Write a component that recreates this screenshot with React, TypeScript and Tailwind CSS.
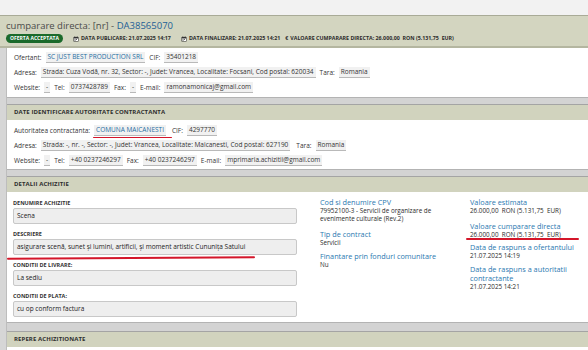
import React from 'react';

const Cal = () => (
  <svg width="6" height="6" viewBox="0 0 12 12" className="mr-[2px] shrink-0">
    <rect x="1" y="2" width="10" height="9" fill="#333" />
    <rect x="2" y="5" width="8" height="5" fill="#fff" />
    <rect x="3" y="0.5" width="1.5" height="3" fill="#333" />
    <rect x="7.5" y="0.5" width="1.5" height="3" fill="#333" />
    <rect x="3" y="6" width="2" height="1.5" fill="#333" />
    <rect x="6" y="6" width="2" height="1.5" fill="#333" />
    <rect x="3" y="8" width="2" height="1.5" fill="#333" />
  </svg>
);

const Val = ({ children, blue }: { children: React.ReactNode; blue?: boolean }) => (
  <span
    className={`inline-block bg-[#f1f1f1] border-b border-[#b9b9b9] px-[2px] leading-[10px] ${
      blue ? 'text-[#1f6ea3]' : 'text-[#333]'
    }`}
  >
    {children}
  </span>
);

const Row = ({ children }: { children: React.ReactNode }) => (
  <div className="h-[15px] flex items-center gap-[4px] whitespace-nowrap">{children}</div>
);

const Separator = () => (
  <div className="h-[8px] bg-[#d3d3d3] border-t border-[#b3b3b3] border-b border-b-[#a4a4a4]" />
);

const SectionHeader = ({ title }: { title: string }) => (
  <div className="h-[15px] bg-[#d1d3be] flex items-center px-[7px] text-[6px] font-bold text-[#2e2e2e] tracking-[0.1px]">
    {title}
  </div>
);

const Field = ({ label, value, mark }: { label: string; value: string; mark?: boolean }) => (
  <div>
    <div className="text-[5.5px] leading-[8px] font-bold text-[#333] uppercase mb-[1px]">{label}</div>
    <div className="relative h-[16px] bg-[#eeeeee] border border-[#c8c8c8] rounded-[2px] px-[3px] flex items-center text-[6.5px] text-[#222]">
      {value}
      {mark && (
        <div className="absolute left-[-7px] top-[17px] w-[248px] h-[1.5px] bg-[#d4162a] rounded-full rotate-[-0.3deg]" />
      )}
    </div>
  </div>
);

const Info = ({ title, lines, className = '' }: { title: string[]; lines: string[]; className?: string }) => (
  <div className={className}>
    {title.map((t) => (
      <div key={t} className="text-[7.3px] leading-[9px] text-[#2a78b0] whitespace-nowrap">
        {t}
      </div>
    ))}
    {lines.map((l) => (
      <div key={l} className="text-[6.3px] leading-[7.5px] text-[#2b2b2b] whitespace-nowrap">
        {l}
      </div>
    ))}
  </div>
);

export default function App() {
  return (
    <div className="w-[588px] h-[350px] overflow-hidden bg-[#f2f2f2] font-['Open_Sans',sans-serif] text-[#333]">
      <div className="h-[15px] bg-[#f2f2f2]" />

      {/* header */}
      <div className="h-[33px] bg-[#d3d5c0] border-t border-[#a9ab97] border-b-2 border-b-[#b4b6a0] px-[6px] pt-[3px]">
        <div className="text-[9.5px] leading-[13px] text-[#4a4a4a]">
          cumparare directa: [nr] - <span className="text-[#1d5f96]">DA38565070</span>
        </div>
        <div className="flex items-center mt-[2px] text-[5.3px] font-bold text-[#2b2b2b] whitespace-nowrap">
          <span className="bg-[#1b6a2b] text-white text-[5px] rounded-full px-[4px] h-[9px] leading-[9px] mr-[10px]">
            OFERTA ACCEPTATA
          </span>
          <Cal />
          <span className="mr-[10px]">DATA PUBLICARE: 21.07.2025 14:17</span>
          <Cal />
          <span className="mr-[5px]">DATA FINALIZARE: 21.07.2025 14:21</span>
          <span className="mr-[2px]">€</span>
          <span>VALOARE CUMPARARE DIRECTA: 26.000,00&nbsp; RON (5.131,75&nbsp; EUR)</span>
        </div>
      </div>

      <div className="flex">
        <div className="w-[7px] bg-[#d6d6d6] border-r border-[#bdbdbd] shrink-0" />
        <div className="flex-1 text-[6.5px]">
          {/* ofertant */}
          <div className="bg-white pt-[2px] pb-[2px] px-[7px]">
            <Row>
              <span>Ofertant:</span>
              <Val blue>SC JUST BEST PRODUCTION SRL</Val>
              <span>CIF:</span>
              <Val>35401218</Val>
            </Row>
            <Row>
              <span>Adresa:</span>
              <Val>Strada: Cuza Vodă, nr. 32, Sector: -, Judet: Vrancea, Localitate: Focsani, Cod postal: 620034</Val>
              <span>Tara:</span>
              <Val>Romania</Val>
            </Row>
            <Row>
              <span>Website:</span>
              <Val>-</Val>
              <span>Tel:</span>
              <Val>0737428789</Val>
              <span>Fax:</span>
              <Val>-</Val>
              <span>E-mail:</span>
              <Val>ramonamonicaj@gmail.com</Val>
            </Row>
          </div>

          <Separator />
          <SectionHeader title="DATE IDENTIFICARE AUTORITATE CONTRACTANTA" />

          <div className="bg-white pt-[3px] pb-[1px] px-[7px]">
            <Row>
              <span>Autoritatea contractanta:</span>
              <span className="relative">
                <Val blue>COMUNA MAICANESTI</Val>
                <span className="absolute left-[-1px] right-[-6px] bottom-[-2px] h-[1.5px] bg-[#d4162a] rounded-full" />
              </span>
              <span className="ml-[2px]">CIF:</span>
              <Val>4297770</Val>
            </Row>
            <Row>
              <span>Adresa:</span>
              <Val>Strada: -, nr. -, Sector: -, Judet: Vrancea, Localitate: Maicanesti, Cod postal: 627190</Val>
              <span className="ml-[2px]">Tara:</span>
              <Val>Romania</Val>
            </Row>
            <Row>
              <span>Website:</span>
              <Val>-</Val>
              <span>Tel:</span>
              <Val>+40 0237246297</Val>
              <span>Fax:</span>
              <Val>+40 0237246297</Val>
              <span>E-mail:</span>
              <Val>mprimaria.achizitii@gmail.com</Val>
            </Row>
          </div>

          <Separator />
          <SectionHeader title="DETALII ACHIZITIE" />

          <div className="bg-white pt-[7px] pb-[5px] pl-[6px] grid grid-cols-[284px_127px_1fr] gap-x-[23px]">
            <div className="flex flex-col gap-[6px]">
              <Field label="Denumire achizitie" value="Scena" />
              <Field
                label="Descriere"
                value="asigurare scenă, sunet și lumini, artificii, și moment artistic Cununița Satului"
                mark
              />
              <Field label="Conditii de livrare:" value="La sediu" />
              <Field label="Conditii de plata:" value="cu op conform factura" />
            </div>

            <div className="-mt-[1px]">
              <Info
                title={['Cod si denumire CPV']}
                lines={['79952100-3 - Servicii de organizare de', 'evenimente culturale (Rev.2)']}
              />
              <Info className="mt-[7.5px]" title={['Tip de contract']} lines={['Servicii']} />
              <Info className="mt-[5.5px]" title={['Finantare prin fonduri comunitare']} lines={['Nu']} />
            </div>

            <div className="-mt-[1px]">
              <Info title={['Valoare estimata']} lines={['26.000,00\u00a0\u00a0RON (5.131,75\u00a0\u00a0EUR)']} />
              <div className="relative mt-[7px]">
                <Info
                  title={['Valoare cumparare directa']}
                  lines={['26.000,00\u00a0\u00a0RON (5.131,75\u00a0\u00a0EUR)']}
                />
                <div className="absolute left-[-4px] top-[16.5px] w-[113px] h-[1.5px] bg-[#d4162a] rounded-full" />
              </div>
              <Info className="mt-[4.5px]" title={['Data de raspuns a ofertantului']} lines={['21.07.2025 14:19']} />
              <Info
                className="mt-[5.5px]"
                title={['Data de raspuns a autoritatii', 'contractante']}
                lines={['21.07.2025 14:21']}
              />
            </div>
          </div>

          <div className="h-[10px] bg-[#d3d3d3] border-t border-[#b3b3b3] border-b border-b-[#a4a4a4]" />
          <SectionHeader title="REPERE ACHIZITIONATE" />
          <div className="bg-white h-[20px]" />
        </div>
      </div>
    </div>
  );
}
